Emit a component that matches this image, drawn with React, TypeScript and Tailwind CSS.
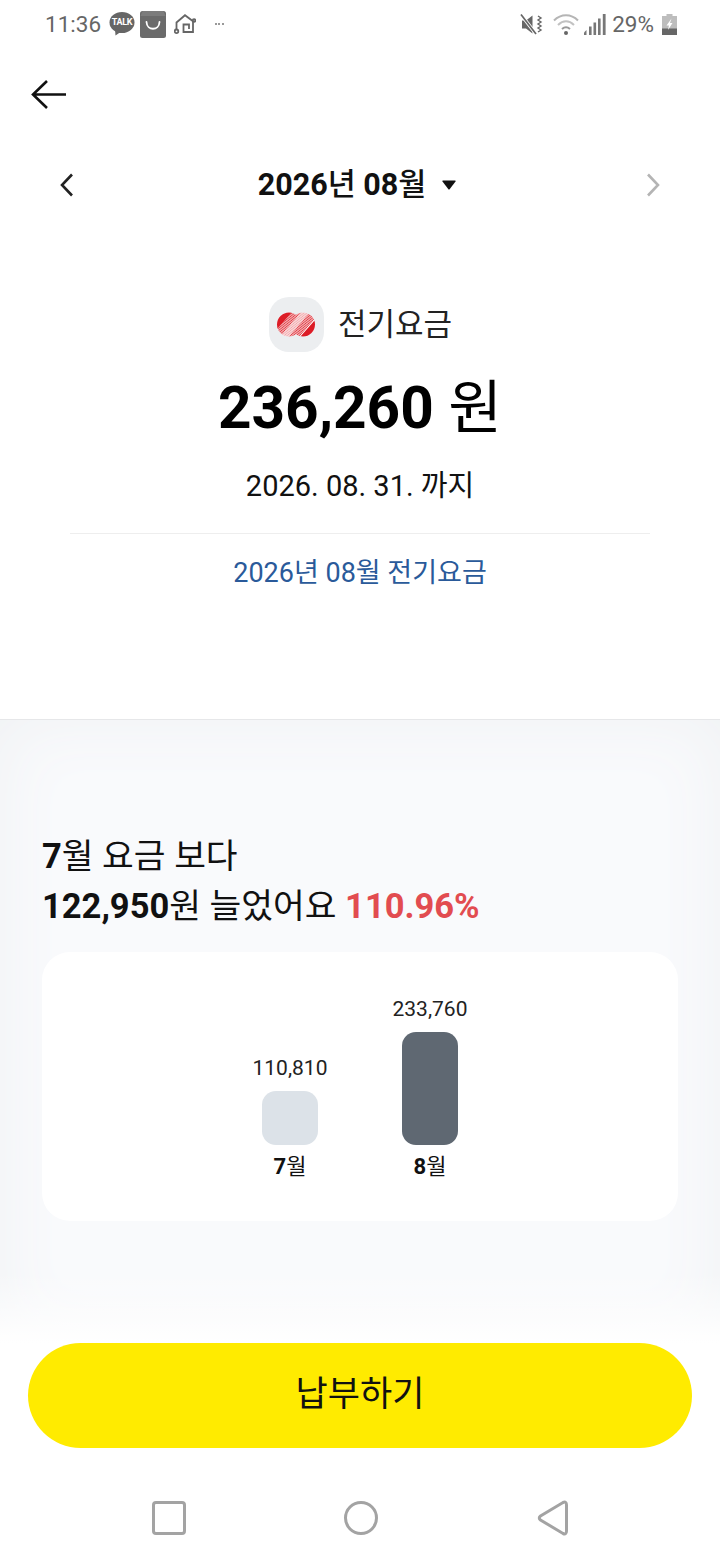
const font = { fontFamily: '"Roboto", "Noto Sans CJK KR", sans-serif' };

function TalkIcon() {
  return (
    <div className="relative h-[24px] w-[26px]">
      <svg width="26" height="24" viewBox="0 0 26 24" className="block">
        <ellipse cx="13" cy="10.5" rx="12.5" ry="10.5" fill="#666" />
        <path d="M6 17 L6.5 23.5 L13 19 Z" fill="#666" />
      </svg>
      <span className="absolute left-0 top-[5px] w-[26px] text-center text-[9px] font-bold leading-[11px] tracking-[-0.3px] text-white">
        TALK
      </span>
    </div>
  );
}

function BagIcon() {
  return (
    <svg width="26" height="27" viewBox="0 0 26 27" className="block">
      <rect width="26" height="27" rx="2.5" fill="#6b6b6b" />
      <path d="M2.5 0 H23.5 L25.5 5 H0.5 Z" fill="#7c7c7c" />
      <path d="M6.5 11 C7 20 19 20 19.5 11" fill="none" stroke="#fff" strokeWidth="1.8" strokeLinecap="round" />
    </svg>
  );
}

function HomeIcon() {
  return (
    <svg width="22" height="20" viewBox="0 0 22 20" fill="none" stroke="#666" strokeWidth="1.8" className="block">
      <path d="M2.5 15 V8.5 L11 1.2 L19 7.2 V18 H9.5 V10.5 H15 V15" />
      <circle cx="2.5" cy="17.3" r="1.8" />
      <circle cx="20" cy="6.5" r="1.3" />
    </svg>
  );
}

function MuteIcon() {
  return (
    <svg width="23" height="21" viewBox="0 0 23 21" className="block">
      <path d="M2 6.5 H6 L12.5 1.5 V19.5 L6 14.5 H2 Z" fill="#666" />
      <path d="M1 0.5 L16 20" stroke="#fff" strokeWidth="3.4" />
      <path d="M1 0.5 L16 20" stroke="#666" strokeWidth="1.7" />
      <path d="M18 2 L21 4 L18 6 L21 8 L18 10 L21 12 L18 14 L21 16 L18 18" fill="none" stroke="#666" strokeWidth="1.4" />
    </svg>
  );
}

function WifiIcon() {
  return (
    <svg width="26" height="21" viewBox="0 0 26 21" fill="none" className="block">
      <path d="M1 6.5 C8 -0.5 18 -0.5 25 6.5" stroke="#b5b5b5" strokeWidth="2" />
      <path d="M5 11 C10 6 16 6 21 11" stroke="#c2c2c2" strokeWidth="2" />
      <path d="M9 15 C11.5 12.8 14.5 12.8 17 15" stroke="#999" strokeWidth="2" />
      <circle cx="13" cy="19" r="2" fill="#666" />
    </svg>
  );
}

function SignalIcon() {
  return (
    <svg width="22" height="21" viewBox="0 0 22 21" className="block" fill="#777">
      <path d="M0 21 V18.5 L2.5 16 V21 Z" />
      <rect x="5" y="12.5" width="2.6" height="8.5" />
      <rect x="9.5" y="8.5" width="2.6" height="12.5" />
      <rect x="14" y="4.5" width="2.6" height="16.5" />
      <rect x="18.8" y="0" width="2.8" height="21" />
    </svg>
  );
}

function BatteryIcon() {
  return (
    <svg width="15" height="21" viewBox="0 0 15 21" className="block">
      <path d="M4.5 0 H10.5 V2 H15 V21 H0 V2 H4.5 Z" fill="#bdbdbd" />
      <rect x="0" y="14.5" width="15" height="6.5" fill="#666" />
      <path d="M9.5 4.5 L4.5 11.5 H7 L6 16 L10.5 9 H8 Z" fill="#fff" />
    </svg>
  );
}

function StatusBar() {
  return (
    <div className="flex h-[46px] items-center pl-[45px] pr-[43px] pt-[2px] text-[#666]">
      <span className="w-[64px] text-[22.5px] leading-none">11:36</span>
      <TalkIcon />
      <div className="ml-[5px]">
        <BagIcon />
      </div>
      <div className="ml-[8px]">
        <HomeIcon />
      </div>
      <span className="ml-[19px] h-[2px] w-[9px] border-t-2 border-dotted border-[#999]" />
      <div className="ml-auto">
        <MuteIcon />
      </div>
      <div className="ml-[10px]">
        <WifiIcon />
      </div>
      <div className="ml-[5px]">
        <SignalIcon />
      </div>
      <span className="ml-[6px] text-[22.5px] leading-none">29%</span>
      <div className="ml-[8px]">
        <BatteryIcon />
      </div>
    </div>
  );
}

function KepcoLogo() {
  const stripes = [];
  for (let i = 0; i < 20; i++) {
    const off = i * 1.5;
    const middle = i > 6 && i < 13;
    stripes.push(
      <path key={i} d={`M${off - 8} 26 L${off + 17} -3`} stroke="#dc1c26" strokeWidth="0.85" opacity={middle ? 0.45 : 1} />,
    );
  }
  return (
    <svg width="38" height="25" viewBox="0 0 38 25" className="block">
      <defs>
        <clipPath id="lobes">
          <circle cx="12" cy="12.5" r="12" />
          <circle cx="26" cy="12.5" r="12" />
          <path d="M4 21 L20 3 H34 L18 21 Z" />
        </clipPath>
      </defs>
      <g clipPath="url(#lobes)">
        <rect width="38" height="25" fill="#fff" />
        <g>{stripes}</g>
        <path d="M0 0 H15 L0 17 Z" fill="#dc1c26" />
        <path d="M38 25 H23 L38 8 Z" fill="#dc1c26" />
      </g>
    </svg>
  );
}

function Bar({ value, label, barClass }: { value: string; label: string; barClass: string }) {
  return (
    <div className="flex w-[80px] flex-col items-center">
      <span className="text-[21px] leading-[24px] text-[#222]">{value}</span>
      <div className={`mt-[11px] w-[56px] rounded-[14px] ${barClass}`} />
      <span className="mt-[8px] text-[22px] leading-[28px] text-[#111]">
        <b>{label}</b>월
      </span>
    </div>
  );
}

export default function App() {
  return (
    <div className="flex h-[1560px] w-[720px] flex-col overflow-hidden bg-white" style={font}>
      <StatusBar />

      <div className="pl-[31px] pt-[34px]">
        <svg width="36" height="30" viewBox="0 0 36 30" fill="none" stroke="#111" strokeWidth="2.6" className="block">
          <path d="M35 14.5 H2 M16 1 L2 14.5 L16 28" />
        </svg>
      </div>

      <div className="mt-[53px] flex h-[44px] items-center justify-between pl-[60px] pr-[60px]">
        <svg width="13" height="24" viewBox="0 0 13 24" fill="none" stroke="#222" strokeWidth="2.6" className="block">
          <path d="M12 1.5 L2 12 L12 22.5" />
        </svg>
        <div className="mr-[6px] flex items-center">
          <span className="text-[30.5px] font-medium leading-none text-[#111]">
            <b>2026</b>년 <b>08</b>월
          </span>
          <svg width="14" height="10" viewBox="0 0 14 10" className="ml-[16px] block" fill="#111">
            <path d="M1 0.5 H13 Q14 0.5 13.5 1.5 L7.8 9 Q7 10 6.2 9 L0.5 1.5 Q0 0.5 1 0.5 Z" />
          </svg>
        </div>
        <svg width="13" height="24" viewBox="0 0 13 24" fill="none" stroke="#b4b4b4" strokeWidth="2.6" className="block">
          <path d="M1 1.5 L11 12 L1 22.5" />
        </svg>
      </div>

      <div className="mt-[90px] flex items-center justify-center gap-[14px] pl-[1px]">
        <div className="flex h-[55px] w-[55px] items-center justify-center rounded-[20px] bg-[#eceef0]">
          <KepcoLogo />
        </div>
        <span className="text-[31px] leading-none text-[#222]">전기요금</span>
      </div>

      <div className="mt-[21px] text-center text-[58.5px] leading-[70px] text-black">
        <b>236,260</b> 원
      </div>

      <div className="mt-[25px] text-center text-[29px] leading-[36px] text-[#111]">2026. 08. 31. 까지</div>

      <div className="mx-[70px] mt-[29px] border-t border-[#eeeeee] pt-[21px] text-center text-[27px] leading-[36px] text-[#2a5a9a]">
        2026년 08월 전기요금
      </div>

      <div className="mt-[128px] h-[624px] shrink-0 border-t border-[#e6e7e9] bg-[#f9fafc] px-[42px] pt-[111px] shadow-[inset_0_0_70px_#f0f2f4]">
        <p className="text-[34.5px] leading-[50px] text-[#111]">
          <b>7</b>월 요금 보다
        </p>
        <p className="text-[34.5px] leading-[50px] text-[#111]">
          <b>122,950</b>원 늘었어요 <b className="text-[#e24c50]">110.96%</b>
        </p>
        <div className="mt-[21px] flex h-[269px] items-start justify-center gap-[60px] rounded-[28px] bg-white">
          <div className="mt-[104px]">
            <Bar value="110,810" label="7" barClass="h-[54px] bg-[#dce2e8]" />
          </div>
          <div className="mt-[45px]">
            <Bar value="233,760" label="8" barClass="h-[113px] bg-[#5f6872]" />
          </div>
        </div>
      </div>

      <div className="-mt-[70px] h-[70px] shrink-0 bg-gradient-to-b from-transparent to-white" />

      <div className="px-[28px]">
        <button className="h-[105px] w-full rounded-full bg-[#ffeb00] text-[35px] text-[#111]">납부하기</button>
      </div>

      <div className="mt-[52px] flex items-center pl-[152px]">
        <div className="h-[34px] w-[34px] rounded-[4px] border-[3px] border-[#a3a3a3]" />
        <div className="ml-[158px] h-[34px] w-[34px] rounded-full border-[3px] border-[#a3a3a3]" />
        <svg width="32" height="36" viewBox="0 0 32 36" fill="none" stroke="#a3a3a3" strokeWidth="3" className="ml-[159px] block">
          <path d="M26 2.5 Q29.5 1 29.5 5 V31 Q29.5 35 26 33.5 L3.5 20 Q1 18 3.5 16 Z" />
        </svg>
      </div>
    </div>
  );
}
